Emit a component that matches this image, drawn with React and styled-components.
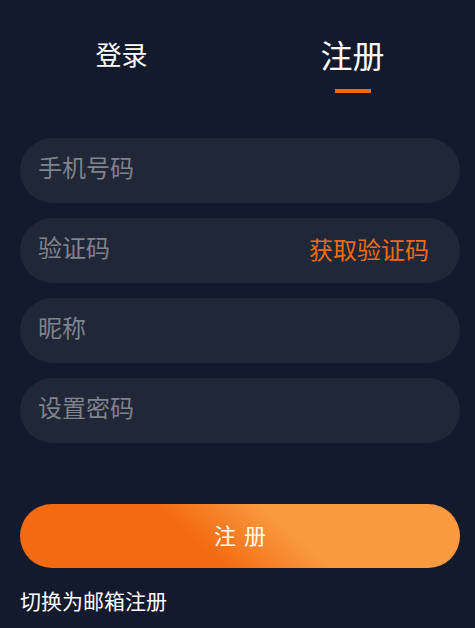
import styled, { createGlobalStyle } from "styled-components";

const GlobalStyle = createGlobalStyle`
  * { box-sizing: border-box; }
  body {
    margin: 0;
    background: #131a2d;
    font-family: "Noto Sans CJK SC", "Noto Sans", sans-serif;
  }
`;

export default function App() {
  return (
    <>
      <GlobalStyle />
      <Page>
        <Tabs>
          <Tab>
            <TabLabel>登录</TabLabel>
          </Tab>
          <Tab>
            <TabLabel $active>注册</TabLabel>
            <Underline />
          </Tab>
        </Tabs>

        <Form>
          <Field>
            <Placeholder>手机号码</Placeholder>
          </Field>
          <Field>
            <Placeholder>验证码</Placeholder>
            <CodeLink>获取验证码</CodeLink>
          </Field>
          <Field>
            <Placeholder>昵称</Placeholder>
          </Field>
          <Field>
            <Placeholder>设置密码</Placeholder>
          </Field>
        </Form>

        <SubmitButton>注册</SubmitButton>
        <SwitchLink>切换为邮箱注册</SwitchLink>
      </Page>
    </>
  );
}

const Page = styled.main`
  min-height: 100vh;
  padding: 0 15px 0 20px;
  display: flex;
  flex-direction: column;
`;

const Tabs = styled.div`
  display: grid;
  grid-template-columns: 1fr 1fr;
  margin: 0 -8px 0 -14px;
  padding-top: 34px;
`;

const Tab = styled.div`
  display: flex;
  flex-direction: column;
  align-items: center;
`;

const TabLabel = styled.div`
  height: 40px;
  display: flex;
  align-items: center;
  font-size: ${(p) => (p.$active ? "32px" : "26px")};
  line-height: 1;
  color: #ffffff;
`;

const Underline = styled.div`
  width: 36px;
  height: 4px;
  margin-top: 15px;
  background: #f06a10;
`;

const Form = styled.div`
  display: flex;
  flex-direction: column;
  gap: 15px;
  margin-top: 45px;
`;

const Field = styled.div`
  height: 65px;
  border-radius: 33px;
  background: #1f2738;
  display: flex;
  align-items: center;
  justify-content: space-between;
  padding: 0 31px 8px 18px;
`;

const Placeholder = styled.span`
  font-size: 24px;
  color: #7f838b;
`;

const CodeLink = styled.span`
  font-size: 24px;
  color: #f36a10;
  margin-top: 4px;
`;

const SubmitButton = styled.button`
  margin-top: 61px;
  height: 64px;
  border: none;
  border-radius: 32px;
  background: linear-gradient(42deg, #f36a10 40%, #f99a40 61%);
  color: #ffffff;
  font-family: inherit;
  font-size: 22px;
  letter-spacing: 8px;
  padding: 0 0 4px 8px;
  cursor: pointer;
`;

const SwitchLink = styled.div`
  margin-top: 17px;
  font-size: 21px;
  color: #ffffff;
`;
